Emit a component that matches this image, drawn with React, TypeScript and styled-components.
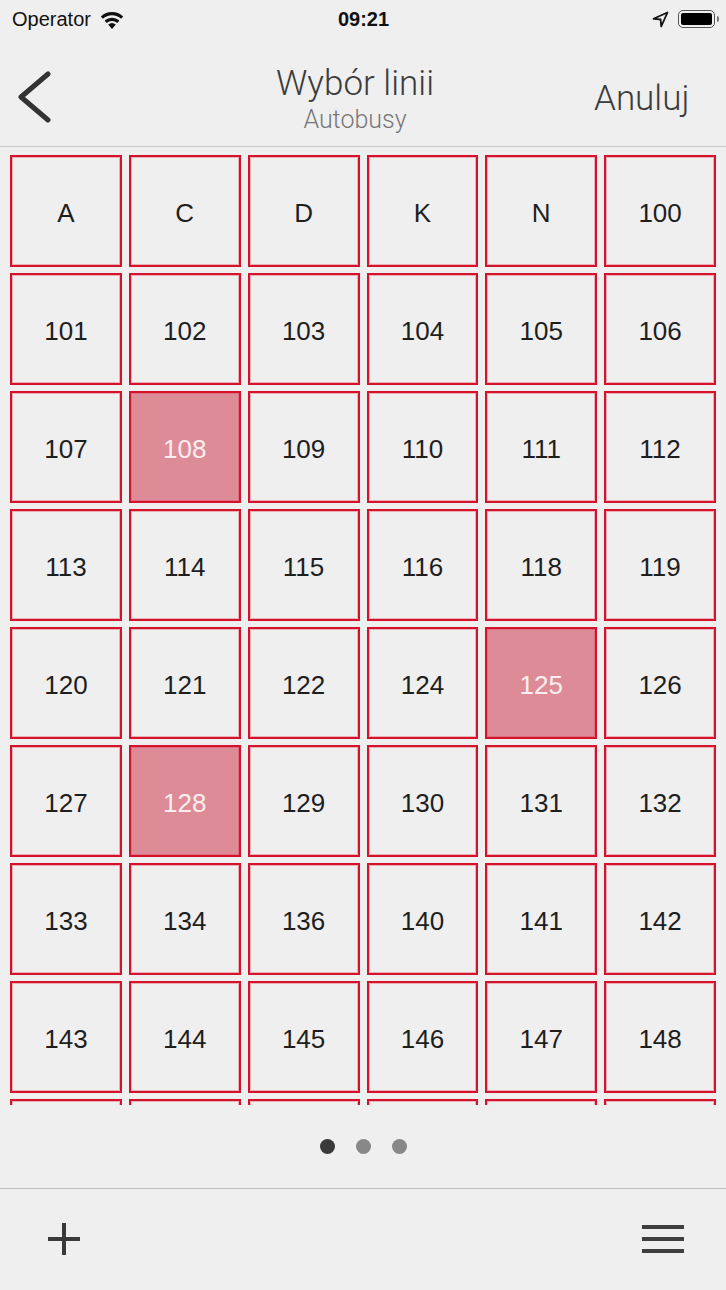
import styled, { createGlobalStyle } from "styled-components";

const GlobalStyle = createGlobalStyle`
  html, body {
    margin: 0;
    padding: 0;
    background: #efefef;
  }
  * {
    box-sizing: border-box;
  }
`;

// Lines shown on the first page of the picker
const LINES = [
  "A", "C", "D", "K", "N", "100",
  "101", "102", "103", "104", "105", "106",
  "107", "108", "109", "110", "111", "112",
  "113", "114", "115", "116", "118", "119",
  "120", "121", "122", "124", "125", "126",
  "127", "128", "129", "130", "131", "132",
  "133", "134", "136", "140", "141", "142",
  "143", "144", "145", "146", "147", "148",
];
const SELECTED = ["108", "125", "128"];
// next row, scrolled just past the bottom edge
const PEEK_ROW = 6;

// Styled
const Screen = styled.div`
  width: 726px;
  height: 1290px;
  display: flex;
  flex-direction: column;
  background: #efefef;
  font-family: "Helvetica Neue", "Liberation Sans", Arial, sans-serif;
  color: #222;
  overflow: hidden;
`;
const StatusBar = styled.div`
  height: 40px;
  flex-shrink: 0;
  display: grid;
  grid-template-columns: 1fr auto 1fr;
  align-items: center;
  padding: 0 11px 2px 12px;
  font-size: 20px;
  color: #111;
`;
const Carrier = styled.div`
  display: flex;
  align-items: center;
  gap: 8px;
`;
const Clock = styled.div`
  font-weight: 700;
  font-size: 20px;
`;
const StatusRight = styled.div`
  display: flex;
  justify-content: flex-end;
  align-items: center;
  gap: 9px;
`;
const Battery = styled.div`
  width: 37px;
  height: 18px;
  border: 1.5px solid #555;
  border-radius: 5px;
  padding: 2px;
  position: relative;
  &::after {
    content: "";
    position: absolute;
    right: -5px;
    top: 5px;
    width: 2px;
    height: 6px;
    border-radius: 0 2px 2px 0;
    background: #777;
  }
  div {
    width: 100%;
    height: 100%;
    border-radius: 2px;
    background: #000;
  }
`;
const NavBar = styled.header`
  height: 107px;
  flex-shrink: 0;
  display: flex;
  align-items: center;
  border-bottom: 1.5px solid #c9c9c9;
`;
const BackButton = styled.button`
  width: 116px;
  height: 100%;
  padding: 8px 0 0 17px;
  border: 0;
  background: none;
  display: flex;
  align-items: center;
  cursor: pointer;
`;
const TitleBlock = styled.div`
  flex: 1;
  display: flex;
  flex-direction: column;
  align-items: center;
  padding-top: 16px;
`;
const Title = styled.h1`
  margin: 0;
  font-family: Roboto, "Liberation Sans", sans-serif;
  font-weight: 300;
  font-size: 35px;
  line-height: 38px;
  color: #3c3c3c;
`;
const Subtitle = styled.div`
  font-family: Roboto, "Liberation Sans", sans-serif;
  font-weight: 300;
  font-size: 25px;
  line-height: 34px;
  color: #777;
`;
const CancelButton = styled.button`
  width: 132px;
  height: 100%;
  padding: 10px 37px 0 0;
  border: 0;
  background: none;
  text-align: right;
  font-family: Roboto, "Liberation Sans", sans-serif;
  font-weight: 300;
  font-size: 35px;
  color: #3c3c3c;
  cursor: pointer;
`;
const Content = styled.main`
  flex: 1;
  overflow: hidden;
  padding: 8px 10px 0;
`;
const LineGrid = styled.div`
  display: grid;
  grid-template-columns: repeat(6, 1fr);
  grid-auto-rows: 112px;
  column-gap: 7px;
  row-gap: 6px;
`;
const LineCell = styled.button<{ $selected?: boolean }>`
  border: 2px solid #d6112c;
  box-shadow: inset 0 0 0 1px rgba(222, 60, 80, 0.35);
  background: ${({ $selected }) => ($selected ? "#dd8c97" : "#efefef")};
  color: ${({ $selected }) => ($selected ? "#fbeef0" : "#1e1e1e")};
  font-family: "Helvetica Neue", "Liberation Sans", Arial, sans-serif;
  font-size: 26px;
  padding: 4px 0 0;
  display: flex;
  align-items: center;
  justify-content: center;
  cursor: pointer;
`;
const Pager = styled.div`
  height: 83px;
  flex-shrink: 0;
  display: flex;
  justify-content: center;
  align-items: center;
  gap: 21px;
  padding-bottom: 1px;
`;
const Dot = styled.span<{ $active?: boolean }>`
  width: 15px;
  height: 15px;
  border-radius: 50%;
  background: ${({ $active }) => ($active ? "#3a3a3a" : "#888")};
`;
const Toolbar = styled.footer`
  height: 102px;
  flex-shrink: 0;
  border-top: 1.5px solid #bdbdbd;
  display: flex;
  justify-content: space-between;
  align-items: center;
  padding: 0 42px 2px 47px;
`;
const ToolButton = styled.button`
  border: 0;
  background: none;
  padding: 0;
  display: flex;
  cursor: pointer;
`;

const App = () => {
  return (
    <Screen>
      <GlobalStyle />
      <StatusBar>
        <Carrier>
          <span>Operator</span>
          <svg width="26" height="19" viewBox="0 0 26 19">
            <path d="M13 19 L9.2 14.6 A5.8 5.8 0 0 1 16.8 14.6 Z" fill="#111" />
            <path d="M5.6 10.6 A10.8 10.8 0 0 1 20.4 10.6 L18.3 13 A7.8 7.8 0 0 0 7.7 13 Z" fill="#111" />
            <path d="M1.8 6.4 A16.4 16.4 0 0 1 24.2 6.4 L22.1 8.8 A13.3 13.3 0 0 0 3.9 8.8 Z" fill="#111" />
          </svg>
        </Carrier>
        <Clock>09:21</Clock>
        <StatusRight>
          <svg width="17" height="17" viewBox="0 0 17 17">
            <path
              d="M15.5 1.5 L1.5 7.8 L8.6 8.4 L9.2 15.5 Z"
              fill="none"
              stroke="#111"
              strokeWidth="1.8"
              strokeLinejoin="round"
            />
          </svg>
          <Battery>
            <div />
          </Battery>
        </StatusRight>
      </StatusBar>

      <NavBar>
        <BackButton aria-label="Wstecz">
          <svg width="34" height="52" viewBox="0 0 34 52">
            <path
              d="M31 3 L4 26 L31 49"
              fill="none"
              stroke="#333"
              strokeWidth="5"
              strokeLinecap="round"
              strokeLinejoin="round"
            />
          </svg>
        </BackButton>
        <TitleBlock>
          <Title>Wybór linii</Title>
          <Subtitle>Autobusy</Subtitle>
        </TitleBlock>
        <CancelButton>Anuluj</CancelButton>
      </NavBar>

      <Content>
        <LineGrid>
          {LINES.map((line) => (
            <LineCell key={line} $selected={SELECTED.includes(line)}>
              {line}
            </LineCell>
          ))}
          {Array.from({ length: PEEK_ROW }, (_, i) => (
            <LineCell key={`peek-${i}`} aria-hidden />
          ))}
        </LineGrid>
      </Content>

      <Pager>
        <Dot $active />
        <Dot />
        <Dot />
      </Pager>

      <Toolbar>
        <ToolButton aria-label="Dodaj">
          <svg width="34" height="34" viewBox="0 0 34 34">
            <path d="M17 1 V33 M1 17 H33" stroke="#3a3a3a" strokeWidth="4" />
          </svg>
        </ToolButton>
        <ToolButton aria-label="Menu">
          <svg width="42" height="30" viewBox="0 0 42 30">
            <path d="M0 3 H42 M0 15 H42 M0 27 H42" stroke="#3f3f3f" strokeWidth="4" />
          </svg>
        </ToolButton>
      </Toolbar>
    </Screen>
  );
};

export default App;
